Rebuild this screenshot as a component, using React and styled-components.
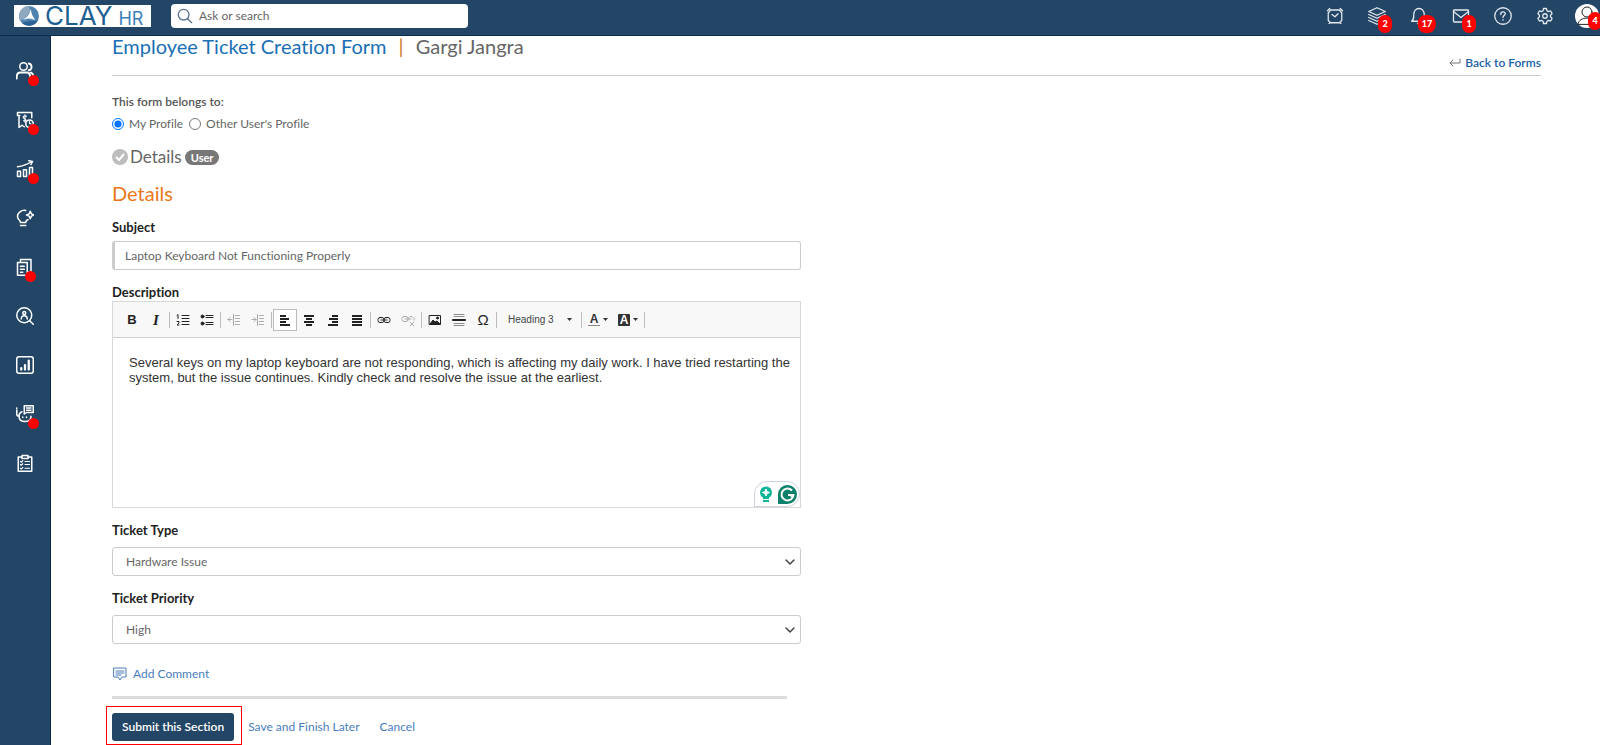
import React, { useState } from 'react'
import styled, { createGlobalStyle } from 'styled-components'

const SUBJECT = 'Laptop Keyboard Not Functioning Properly';
const DESCRIPTION = 'Several keys on my laptop keyboard are not responding, which is affecting my daily work. I have tried restarting the system, but the issue continues. Kindly check and resolve the issue at the earliest.';

const Icon = ({ size = 20, box = 24, stroke = 2, children }) => (
    <svg width={size} height={size} viewBox={`0 0 ${box} ${box}`} fill="none" stroke="currentColor"
        strokeWidth={stroke} strokeLinecap="round" strokeLinejoin="round" aria-hidden="true">
        {children}
    </svg>
)

const Lines = ({ rows }) => (
    <Icon size={14} box={14} stroke={0}>
        {rows.map(([x, w], i) => (
            <rect key={i} x={x} y={2 + i * 3} width={w} height="2" fill="currentColor" />
        ))}
    </Icon>
)

const sideItems = [
    {
        label: 'People', dot: true, icon: <>
            <circle cx="10" cy="6" r="5" />
            <path d="M1 22v-2c0-4 2-6 5-6h8c3 0 5 2 5 6v2M17 2c5 1 5 8 0 9M20 14c2 1 3 3 3 5" strokeWidth="2.500" />
        </>
    },
    {
        label: 'Expenses', dot: true, icon: <>
            <path d="M21 9V2H2v4h3M4 6v16l4-3 3 2" />
            <path d="M14 7c-4-2-6 2-3 3s3 4-1 3M12 5v10" strokeWidth="1.500" />
            <circle cx="18" cy="17" r="5" /><path d="M18 14v3h2" strokeWidth="1.500" />
        </>
    },
    {
        label: 'Performance', dot: true, icon: <>
            <path d="M2 15h4v7H2zM10 13h4v9h-4zM18 10h4v12h-4zM2 9c8-1 13-3 19-7M17 1l5 1-2 4" />
        </>
    },
    {
        label: 'Ideas', icon: <>
            <path d="M13 2C7 1 2 5 2 10c0 4 4 5 4 8h7c0-2 1-3 3-4M6 22h7" />
            <path d="M19 3l1.500 3.500L24 8l-3.500 1.500L19 13l-1.500-3.500L14 8l3.500-1.500z" />
        </>
    },
    {
        label: 'Documents', dot: true, near: true, icon: <>
            <path d="M2 6h13v17H2zM6 5V2h14v17h-4M6 11h5M6 15h5M6 19h3" />
        </>
    },
    {
        label: 'Recruitment', icon: <>
            <circle cx="11" cy="11" r="10" /><circle cx="11" cy="8" r="2" />
            <path d="M7 16c0-6 8-6 8 0M18 18l5 5" />
        </>
    },
    {
        label: 'Reports', icon: <>
            <rect x="1" y="1" width="22" height="22" rx="3" />
            <path d="M7 18v-2M12 18v-6M17 18V6" strokeWidth="3" />
        </>
    },
    {
        label: 'Assistant', dot: true, icon: <>
            <path d="M11 1h12v9H14l-3 2zM14 4h6M14 7h6M8 9c-3 1-4 3-4 6 0 5 3 7 8 7s8-2 8-7" />
            <path d="M1 7v5c0 2 1 3 3 3M1 4v1M9 16v.5M14 16v.5" />
        </>
    },
    {
        label: 'Forms', icon: <>
            <path d="M8 4H3v19h18V4h-5M8 2h8v4H8z" />
            <path d="M6 10l1 1 2-2M12 10h6M6 14l1 1 2-2M12 14h6M6 19l1 1 2-2M12 19h6" strokeWidth="1.500" />
        </>
    },
];

const topItems = [
    {
        label: 'Reminders', icon: <>
            <path d="M6 4h12l3 4v10l-3 3H6l-3-3V8zM2 5l3-3M22 5l-3-3M8 10l4 3 4-4M4 22l2-1M20 22l-2-1" />
        </>
    },
    {
        label: 'Stack', badge: 2, icon: <>
            <path d="M12 1l11 5-11 5L1 6zM1 10l11 5 11-5M1 14l11 5 11-5M1 18l11 5 11-5" />
        </>
    },
    {
        label: 'Notifications', badge: 17, icon: <>
            <path d="M2 19h20c-3-2-3-4-3-9 0-5-3-8-7-8s-7 3-7 8c0 5 0 7-3 9zM10 22h4" />
        </>
    },
    {
        label: 'Mail', badge: 1, icon: <>
            <rect x="2" y="4" width="20" height="16" rx="1" /><path d="M2 6l10 8 10-8" />
        </>
    },
    {
        label: 'Help', icon: <>
            <circle cx="12" cy="12" r="11" />
            <path d="M9 10c0-5 6-4 6-1 0 2-3 2-3 5M12 17v.5" />
        </>
    },
    {
        label: 'Settings', icon: <>
            <path d="M10 2h4l.6 3 2 1.200L19.500 5.300l2 3.400L19.300 11v2l2.200 2.300-2 3.400-2.900-.9-2 1.200L14 22h-4l-.6-3-2-1.200-2.900.9-2-3.400L4.700 13v-2L2.500 8.700l2-3.400 2.900.9 2-1.200z" />
            <circle cx="12" cy="12" r="3" />
        </>
    },
];

const toolGroups = [
    [
        { label: 'Bold', icon: <ToolLetter $bold>B</ToolLetter> },
        { label: 'Italic', icon: <ToolLetter $italic>I</ToolLetter> },
    ],
    [
        {
            label: 'Numbered list', icon: <Icon size={14} box={14} stroke={1}>
                <path d="M6 2.500h7M6 5.500h7M6 8.500h7M6 11.500h7M1 2.500l1-1v4M1 8.500h2v1.500l-2 2h2" />
            </Icon>
        },
        {
            label: 'Bulleted list', icon: <Icon size={14} box={14} stroke={1}>
                <path d="M6 2.500h7M6 4.500h7M6 9.500h7M6 11.500h7" />
                <circle cx="2.500" cy="3.500" r="1.500" fill="currentColor" /><circle cx="2.500" cy="10.500" r="1.500" fill="currentColor" />
            </Icon>
        },
    ],
    [
        {
            label: 'Decrease indent', disabled: true, icon: <Icon size={14} box={14} stroke={1}>
                <path d="M1 6.500h4M3 4.500l-2 2 2 2M6.500 1.500v11M8.500 2.500h4M8.500 5.500h4M8.500 8.500h4M8.500 11.500h4" />
            </Icon>
        },
        {
            label: 'Increase indent', disabled: true, icon: <Icon size={14} box={14} stroke={1}>
                <path d="M1 6.500h4M3 4.500l2 2-2 2M6.500 1.500v11M8.500 2.500h4M8.500 5.500h4M8.500 8.500h4M8.500 11.500h4" />
            </Icon>
        },
    ],
    [
        { label: 'Align left', active: true, icon: <Lines rows={[[2, 6], [2, 9], [2, 6], [2, 10]]} /> },
        { label: 'Center', icon: <Lines rows={[[2, 10], [4, 6], [2, 10], [4, 6]]} /> },
        { label: 'Align right', icon: <Lines rows={[[6, 6], [3, 9], [6, 6], [2, 10]]} /> },
        { label: 'Justify', icon: <Lines rows={[[2, 10], [2, 10], [2, 10], [2, 10]]} /> },
    ],
    [
        {
            label: 'Link', icon: <Icon size={14} box={14} stroke={1}>
                <rect x="1" y="4.500" width="6" height="5" rx="2" /><rect x="7" y="4.500" width="6" height="5" rx="2" /><path d="M4 7h6" />
            </Icon>
        },
        {
            label: 'Unlink', disabled: true, icon: <Icon size={14} box={14} stroke={1}>
                <rect x="1" y="3.500" width="6" height="5" rx="2" /><path d="M7 7V5.500l2-2h2l2 2V7M4 6h6M9 9l4 4M13 9l-4 4" />
            </Icon>
        },
    ],
    [
        {
            label: 'Image', icon: <Icon size={14} box={14} stroke={1}>
                <rect x="1.500" y="2.500" width="11" height="9" /><path d="M2 11l3-4 2 2 2-1 3 3z" fill="currentColor" /><circle cx="9.500" cy="5" r="1" fill="currentColor" />
            </Icon>
        },
        {
            label: 'Horizontal line', icon: <Icon size={14} box={14} stroke={1}>
                <path d="M2 1.500h10M2 3.500h10M2 10.500h10M2 12.500h10" strokeOpacity="0.5" /><path d="M1 7h12" strokeWidth="2" />
            </Icon>
        },
        { label: 'Special character', icon: <ToolLetter $large>Ω</ToolLetter> },
    ],
];

const Caret = () => (
    <svg width="5" height="3" viewBox="0 0 5 3" aria-hidden="true"><path d="M0 0h5L2.500 3z" fill="#333" /></svg>
)

const Chevron = () => (
    <Icon size={12} box={12} stroke={1.5}><path d="M2 4l4 4 4-4" /></Icon>
)

const TopBar = () => (
    <Header>
        <Logo href="#" aria-label="Clay HR">
            <svg width="20" height="20" viewBox="0 0 20 20" aria-hidden="true">
                <circle cx="10" cy="10" r="10" fill="#4f83b0" />
                <path d="M1 14A10 10 0 0 1 10 0l1 5-5 8z" fill="#8fa9c0" />
                <path d="M19 14A10 10 0 0 1 3 17l7-2 6 0z" fill="#2c6394" />
                <path d="M12 3c0 5 2 7 4 11-4-2-8-2-12 0 5-3 6-6 8-11z" fill="#fff" />
            </svg>
            <LogoText>CLAY</LogoText>
            <LogoSuffix>HR</LogoSuffix>
        </Logo>
        <SearchBox>
            <Icon size={16} stroke={2}><circle cx="10" cy="10" r="8" /><path d="M16 16l6 6" /></Icon>
            <SearchInput type="text" placeholder="Ask or search" aria-label="Ask or search" />
        </SearchBox>
        <TopNav>
            {topItems.map(item => (
                <TopButton key={item.label} type="button" aria-label={item.label}>
                    <Icon size={18} stroke={1.7}>{item.icon}</Icon>
                    {item.badge && <Badge>{item.badge}</Badge>}
                </TopButton>
            ))}
            <Avatar type="button" aria-label="Account">
                <Icon size={24} stroke={1}>
                    <circle cx="12" cy="8" r="5" /><path d="M3 20c1-8 17-8 18 0z" />
                </Icon>
                <Badge>4</Badge>
            </Avatar>
        </TopNav>
    </Header>
)

const Editor = ({ value, onChange }) => (
    <EditorBox>
        <Toolbar>
            {toolGroups.map((group, i) => (
                <React.Fragment key={`group${i}`}>
                    {group.map(tool => (
                        <ToolButton key={tool.label} type="button" aria-label={tool.label}
                            disabled={tool.disabled} $active={tool.active}>
                            {tool.icon}
                        </ToolButton>
                    ))}
                    <ToolDivider />
                </React.Fragment>
            ))}
            <FormatPicker>
                <FormatSelect aria-label="Paragraph format" defaultValue="Heading 3">
                    <option>Heading 3</option>
                    <option>Normal</option>
                </FormatSelect>
                <Caret />
            </FormatPicker>
            <ToolDivider />
            <ColorButton type="button" aria-label="Text color">
                <TextColor>A</TextColor><Caret />
            </ColorButton>
            <ColorButton type="button" aria-label="Background color">
                <BackColor>A</BackColor><Caret />
            </ColorButton>
            <ToolDivider />
        </Toolbar>
        <EditorText id="description" spellCheck="false" value={value} onChange={onChange} />
        <Assistant>
            <svg width="14" height="17" viewBox="0 0 14 17" aria-hidden="true">
                <circle cx="7" cy="6.500" r="6" fill="#0eb597" />
                <path d="M4 11h6v2H4zM4 14h6v2H4z" fill="#0eb597" />
                <path d="M7 3l1 2.500L10.500 6.500 8 7.500 7 10 6 7.500 3.500 6.500 6 5.500z" fill="#fff" stroke="#fff" />
            </svg>
            <svg width="19" height="19" viewBox="0 0 19 19" aria-hidden="true">
                <path d="M9.500 0a9.500 9.500 0 1 1 0 19H0V9.500A9.500 9.500 0 0 1 9.500 0z" fill="#0b806a" />
                <path d="M14 5.500A6 6 0 1 0 15.500 10H10M13 12l2.500-2" fill="none" stroke="#fff" strokeWidth="2" />
            </svg>
        </Assistant>
    </EditorBox>
)

const App = () => {
    const [owner, setOwner] = useState('me');
    const [subject, setSubject] = useState(SUBJECT);
    const [description, setDescription] = useState(DESCRIPTION);

    return (
        <Page>
            <GlobalStyle />
            <TopBar />
            <Body>
                <SideBar>
                    {sideItems.map(item => (
                        <SideLink key={item.label} href="#" aria-label={item.label}>
                            <Icon size={18} stroke={2}>{item.icon}</Icon>
                            {item.dot && <Dot $near={item.near} />}
                        </SideLink>
                    ))}
                </SideBar>
                <Main>
                    <TitleRow>
                        <Title>
                            Employee Ticket Creation Form <TitleBar>|</TitleBar> <TitleUser>Gargi Jangra</TitleUser>
                        </Title>
                        <BackLink href="#">
                            <Icon size={12} box={12} stroke={1}><path d="M11 2v4H1M4 3L1 6l3 3" stroke="#777" /></Icon>
                            Back to Forms
                        </BackLink>
                    </TitleRow>
                    <Form onSubmit={e => e.preventDefault()}>
                        <Owner>
                            <OwnerLegend>This form belongs to:</OwnerLegend>
                            <RadioLabel>
                                <Radio name="owner" checked={owner === 'me'} onChange={() => setOwner('me')} />
                                My Profile
                            </RadioLabel>
                            <RadioLabel>
                                <Radio name="owner" checked={owner === 'other'} onChange={() => setOwner('other')} />
                                Other User's Profile
                            </RadioLabel>
                        </Owner>
                        <Step>
                            <svg width="16" height="16" viewBox="0 0 16 16" aria-hidden="true">
                                <circle cx="8" cy="8" r="8" fill="#bdbdbd" />
                                <path d="M4 8l3 3 5-6" fill="none" stroke="#fff" strokeWidth="2" />
                            </svg>
                            Details
                            <Pill>User</Pill>
                        </Step>
                        <SectionTitle>Details</SectionTitle>
                        <Label htmlFor="subject">Subject</Label>
                        <SubjectInput id="subject" type="text" value={subject} onChange={e => setSubject(e.target.value)} />
                        <EditorLabel htmlFor="description">Description</EditorLabel>
                        <Editor value={description} onChange={e => setDescription(e.target.value)} />
                        <SelectLabel htmlFor="type">Ticket Type</SelectLabel>
                        <SelectBox>
                            <Select id="type">
                                <option>Hardware Issue</option>
                                <option>Software Issue</option>
                            </Select>
                            <Chevron />
                        </SelectBox>
                        <SelectLabel htmlFor="priority">Ticket Priority</SelectLabel>
                        <SelectBox>
                            <Select id="priority">
                                <option>High</option>
                                <option>Low</option>
                            </Select>
                            <Chevron />
                        </SelectBox>
                        <CommentLink href="#">
                            <Icon size={14} box={14} stroke={1}>
                                <path d="M1 1h12v9H9l-2 3-2-3H1zM3 4h8M3 6h8M3 8h5" />
                            </Icon>
                            Add Comment
                        </CommentLink>
                        <Rule />
                        <Actions>
                            <SubmitFrame>
                                <SubmitButton type="submit">Submit this Section</SubmitButton>
                            </SubmitFrame>
                            <ActionLink href="#">Save and Finish Later</ActionLink>
                            <ActionLink href="#">Cancel</ActionLink>
                        </Actions>
                    </Form>
                </Main>
            </Body>
        </Page>
    )
}

export default App

//Styled components
const GlobalStyle = createGlobalStyle`
  * {
    box-sizing: border-box;
  }
  body {
    margin: 0;
    background: #fff;
    color: #666;
    font: 12px/18px Lato, "Liberation Sans", sans-serif;
    font-variant-ligatures: none;
  }
  button, input, select, textarea {
    font: inherit;
    color: inherit;
  }
  a {
    text-decoration: none;
  }
  svg {
    flex-shrink: 0;
  }
`;

const Page = styled.div`
  display: flex;
  flex-direction: column;
  min-height: 100vh;
`;

const Header = styled.header`
  display: flex;
  align-items: flex-start;
  height: 36px;
  padding: 4px 1px 0 14px;
  background: #244666;
  border-bottom: 1px solid #0c2a50;
`;

const Logo = styled.a`
  display: flex;
  align-items: center;
  gap: 6px;
  height: 22px;
  width: 137px;
  margin-top: 1px;
  padding-left: 5px;
  background: #fff;
  color: #1d5f93;
  font-family: Inter, "Liberation Sans", sans-serif;
`;

const LogoText = styled.span`
  font-size: 26px;
  line-height: 22px;
`;

const LogoSuffix = styled.span`
  font-size: 18px;
  line-height: 16px;
  align-self: flex-end;
  color: #3d83b8;
`;

const SearchBox = styled.div`
  display: flex;
  align-items: center;
  gap: 6px;
  width: 297px;
  height: 24px;
  margin-left: 20px;
  padding: 0 6px;
  background: #fff;
  border-radius: 4px;
  color: #58718c;
`;

const SearchInput = styled.input`
  flex: 1;
  border: 0;
  outline: 0;
  padding: 0;
  background: none;
  &::placeholder {
    color: #666;
    opacity: 1;
  }
`;

const TopNav = styled.nav`
  display: flex;
  align-items: center;
  gap: 18px;
  margin-left: auto;
`;

const TopButton = styled.button`
  position: relative;
  display: flex;
  justify-content: center;
  width: 24px;
  padding: 0;
  border: 0;
  background: none;
  color: #e3e9ef;
`;

const Badge = styled.span`
  position: absolute;
  top: 8px;
  left: 20px;
  transform: translateX(-50%);
  min-width: 14px;
  padding: 0 4px;
  background: #f00;
  border-radius: 8px;
  color: #fff;
  font-size: 9px;
  font-weight: 900;
  line-height: 18px;
  text-align: center;
`;

const Avatar = styled(TopButton)`
  background: #fff;
  border-radius: 50%;
  color: #222;
`;

const Body = styled.div`
  display: flex;
  flex: 1;
`;

const SideBar = styled.nav`
  display: flex;
  flex-direction: column;
  gap: 31px;
  width: 51px;
  padding: 26px 16px 0;
  background: #244666;
  border-right: 1px solid #0c2a50;
`;

const SideLink = styled.a`
  position: relative;
  display: flex;
  color: #fff;
`;

const Dot = styled.span`
  position: absolute;
  top: 13px;
  left: ${props => props.$near ? '9px' : '12px'};
  width: 11px;
  height: 11px;
  background: #f00;
  border-radius: 50%;
`;

const Main = styled.main`
  flex: 1;
  padding: 0 59px 0 61px;
`;

const TitleRow = styled.div`
  display: flex;
  justify-content: space-between;
  align-items: flex-end;
  height: 40px;
  border-bottom: 1px solid #ccc;
`;

const Title = styled.h1`
  align-self: flex-start;
  margin: 0;
  color: #1a6fb5;
  font-size: 20px;
  font-weight: 400;
  line-height: 20px;
`;

const TitleBar = styled.span`
  margin: 0 7px;
  color: #c77b2b;
`;

const TitleUser = styled.span`
  color: #666;
`;

const BackLink = styled.a`
  display: flex;
  align-items: center;
  gap: 4px;
  padding-bottom: 3px;
  color: #1a62a8;
  font-weight: 600;
`;

const Form = styled.form`
  display: flex;
  flex-direction: column;
  max-width: 689px;
`;

const Owner = styled.fieldset`
  display: flex;
  gap: 6px;
  margin: 17px 0 0;
  padding: 0;
  border: 0;
`;

const OwnerLegend = styled.legend`
  margin-bottom: 4px;
  padding: 0;
  color: #555;
  font-weight: 600;
`;

const RadioLabel = styled.label`
  display: flex;
  align-items: center;
  gap: 5px;
`;

const Radio = styled.input.attrs({ type: 'radio' })`
  width: 12px;
  height: 12px;
  margin: 0;
`;

const Step = styled.div`
  display: flex;
  align-items: center;
  gap: 2px;
  margin-top: 13px;
  font-size: 17px;
  line-height: 22px;
`;

const Pill = styled.span`
  margin-left: 1px;
  padding: 0 6px;
  background: #777;
  border-radius: 8px;
  color: #fff;
  font-size: 11px;
  font-weight: 700;
  line-height: 15px;
`;

const SectionTitle = styled.h2`
  margin: 13px 0 0;
  color: #e8771a;
  font-size: 20px;
  font-weight: 400;
  line-height: 24px;
`;

const Label = styled.label`
  margin: 13px 0 5px;
  color: #222;
  font-size: 13px;
  font-weight: 700;
`;

const EditorLabel = styled(Label)`
  margin-bottom: 0;
`;

const SelectLabel = styled(Label)`
  margin-bottom: 8px;
`;

const SubjectInput = styled.input`
  height: 29px;
  padding: 0 10px;
  border: 1px solid #ccc;
  border-left-width: 3px;
  border-radius: 3px;
`;

const EditorBox = styled.div`
  position: relative;
  display: flex;
  flex-direction: column;
  border: 1px solid #d8d8d8;
`;

const Toolbar = styled.div`
  display: flex;
  align-items: center;
  height: 36px;
  padding-left: 7px;
  background: #f8f8f8;
  border-bottom: 1px solid #d1d1d1;
`;

const ToolButton = styled.button`
  display: flex;
  align-items: center;
  justify-content: center;
  width: 24px;
  height: 22px;
  padding: 0;
  background: ${props => props.$active ? '#fff' : 'none'};
  border: 1px solid ${props => props.$active ? '#bcbcbc' : 'transparent'};
  color: #222;
  opacity: ${props => props.disabled ? 0.35 : 1};
`;

const ToolDivider = styled.span`
  width: 1px;
  height: 16px;
  margin: 0 1px;
  background: #bcbcbc;
`;

// function declaration because the tool lists above use it before this line
function ToolLetter(props) {
    return <Letter {...props} />
}

const Letter = styled.span`
  font-family: ${props => props.$italic ? '"Liberation Serif", serif' : '"Liberation Sans", sans-serif'};
  font-size: ${props => props.$bold ? '13px' : '15px'};
  font-style: ${props => props.$italic ? 'italic' : 'normal'};
  font-weight: ${props => props.$large ? 400 : 700};
`;

const FormatPicker = styled.span`
  display: flex;
  align-items: center;
  width: 82px;
  padding: 0 8px 0 10px;
`;

const FormatSelect = styled.select`
  flex: 1;
  min-width: 0;
  padding: 0;
  appearance: none;
  background: none;
  border: 0;
  font-family: "Liberation Sans", sans-serif;
  font-size: 10px;
  color: #444;
`;

const ColorButton = styled.button`
  display: flex;
  align-items: center;
  gap: 3px;
  width: 30px;
  padding: 0 0 0 5px;
  background: none;
  border: 0;
  font-family: "Liberation Sans", sans-serif;
  font-size: 12px;
  font-weight: 700;
`;

const TextColor = styled.span`
  width: 12px;
  border-bottom: 1px solid #888;
  color: #333;
  line-height: 12px;
  text-align: center;
`;

const BackColor = styled.span`
  width: 12px;
  background: #333;
  border-radius: 1px;
  color: #fff;
  line-height: 12px;
  text-align: center;
`;

const EditorText = styled.textarea`
  display: block;
  height: 169px;
  padding: 17px 4px 17px 16px;
  border: 0;
  outline: 0;
  resize: none;
  color: #333;
  font-family: "Liberation Sans", sans-serif;
  font-size: 13px;
  line-height: 15px;
`;

const Assistant = styled.div`
  position: absolute;
  right: 0;
  bottom: 0;
  display: flex;
  align-items: center;
  gap: 5px;
  padding: 3px 2px 2px 4px;
  background: #fff;
  border: 1px solid #cfd3e2;
  border-radius: 13px 13px 13px 0;
`;

const SelectBox = styled.div`
  display: grid;
  grid-template-columns: 1fr 12px;
  align-items: center;
  height: 29px;
  padding-right: 4px;
  border: 1px solid #ccc;
  border-radius: 3px;
`;

const Select = styled.select`
  grid-area: 1 / 1 / 2 / 3;
  height: 27px;
  padding: 0 13px;
  appearance: none;
  background: none;
  border: 0;

  & + svg {
    grid-area: 1 / 2;
    color: #444;
    pointer-events: none;
  }
`;

const CommentLink = styled.a`
  display: flex;
  align-items: center;
  align-self: flex-start;
  gap: 6px;
  margin-top: 21px;
  padding-left: 1px;
  color: #4a7dbd;
`;

const Rule = styled.hr`
  width: 98%;
  height: 3px;
  margin: 13px 0 7px;
  border: 0;
  background: #dcdcdc;
`;

const Actions = styled.div`
  display: flex;
  align-items: center;
  gap: 20px;
`;

const SubmitFrame = styled.div`
  margin: 0 -14px 0 -6px;
  padding: 6px 7px 3px 5px;
  border: 1px solid #f00;
`;

const SubmitButton = styled.button`
  display: block;
  height: 28px;
  padding: 0 10px;
  background: #244666;
  border: 0;
  border-radius: 3px;
  color: #fff;
  font-weight: 600;
`;

const ActionLink = styled.a`
  padding-top: 2px;
  color: #4a7dbd;
`;
